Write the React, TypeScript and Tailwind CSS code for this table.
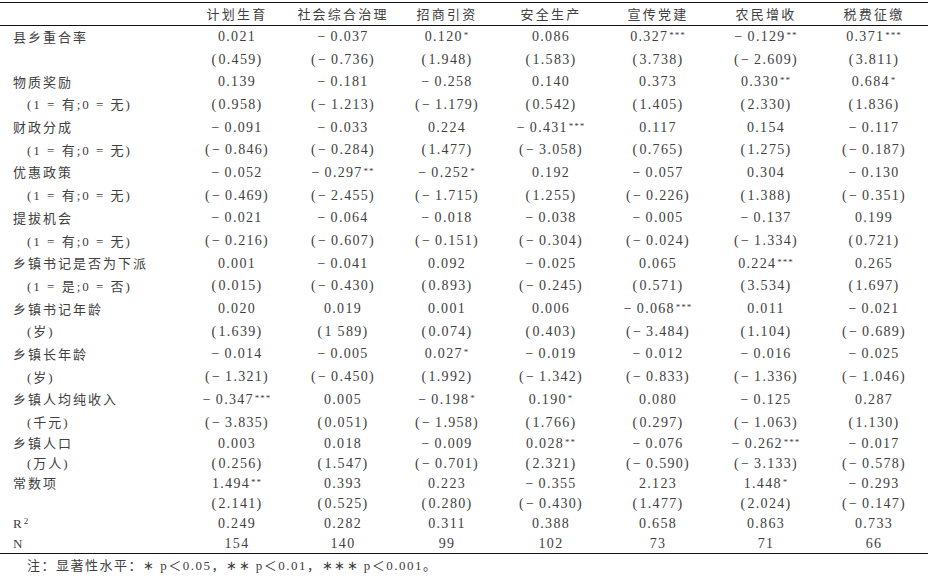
import type { ReactNode } from 'react'

const HEADERS = ['计划生育', '社会综合治理', '招商引资', '安全生产', '宣传党建', '农民增收', '税费征缴']
const WIDTHS = ['w-[106px]', 'w-[106px]', 'w-[102px]', 'w-[106px]', 'w-[108px]', 'w-[108px]', 'w-[108px]']

type Row = { label: string; sub?: boolean; cells: string[]; short?: boolean }

const YN = '(1 = 有;0 = 无)'

const ROWS: Row[] = [
  { label: '县乡重合率', cells: ['0.021', '-0.037', '0.120*', '0.086', '0.327***', '-0.129**', '0.371***'] },
  { label: '', cells: ['(0.459)', '(-0.736)', '(1.948)', '(1.583)', '(3.738)', '(-2.609)', '(3.811)'] },
  { label: '物质奖励', cells: ['0.139', '-0.181', '-0.258', '0.140', '0.373', '0.330**', '0.684*'] },
  { label: YN, sub: true, cells: ['(0.958)', '(-1.213)', '(-1.179)', '(0.542)', '(1.405)', '(2.330)', '(1.836)'] },
  { label: '财政分成', cells: ['-0.091', '-0.033', '0.224', '-0.431***', '0.117', '0.154', '-0.117'] },
  { label: YN, sub: true, cells: ['(-0.846)', '(-0.284)', '(1.477)', '(-3.058)', '(0.765)', '(1.275)', '(-0.187)'] },
  { label: '优惠政策', cells: ['-0.052', '-0.297**', '-0.252*', '0.192', '-0.057', '0.304', '-0.130'] },
  { label: YN, sub: true, cells: ['(-0.469)', '(-2.455)', '(-1.715)', '(1.255)', '(-0.226)', '(1.388)', '(-0.351)'] },
  { label: '提拔机会', cells: ['-0.021', '-0.064', '-0.018', '-0.038', '-0.005', '-0.137', '0.199'] },
  { label: YN, sub: true, cells: ['(-0.216)', '(-0.607)', '(-0.151)', '(-0.304)', '(-0.024)', '(-1.334)', '(0.721)'] },
  { label: '乡镇书记是否为下派', cells: ['0.001', '-0.041', '0.092', '-0.025', '0.065', '0.224***', '0.265'] },
  { label: '(1 = 是;0 = 否)', sub: true, cells: ['(0.015)', '(-0.430)', '(0.893)', '(-0.245)', '(0.571)', '(3.534)', '(1.697)'] },
  { label: '乡镇书记年龄', cells: ['0.020', '0.019', '0.001', '0.006', '-0.068***', '0.011', '-0.021'] },
  { label: '(岁)', sub: true, cells: ['(1.639)', '(1 589)', '(0.074)', '(0.403)', '(-3.484)', '(1.104)', '(-0.689)'] },
  { label: '乡镇长年龄', cells: ['-0.014', '-0.005', '0.027*', '-0.019', '-0.012', '-0.016', '-0.025'] },
  { label: '(岁)', sub: true, cells: ['(-1.321)', '(-0.450)', '(1.992)', '(-1.342)', '(-0.833)', '(-1.336)', '(-1.046)'] },
  { label: '乡镇人均纯收入', cells: ['-0.347***', '0.005', '-0.198*', '0.190*', '0.080', '-0.125', '0.287'] },
  { label: '(千元)', sub: true, cells: ['(-3.835)', '(0.051)', '(-1.958)', '(1.766)', '(0.297)', '(-1.063)', '(1.130)'] },
  { label: '乡镇人口', short: true, cells: ['0.003', '0.018', '-0.009', '0.028**', '-0.076', '-0.262***', '-0.017'] },
  { label: '(万人)', sub: true, short: true, cells: ['(0.256)', '(1.547)', '(-0.701)', '(2.321)', '(-0.590)', '(-3.133)', '(-0.578)'] },
  { label: '常数项', short: true, cells: ['1.494**', '0.393', '0.223', '-0.355', '2.123', '1.448*', '-0.293'] },
  { label: '', short: true, cells: ['(2.141)', '(0.525)', '(0.280)', '(-0.430)', '(1.477)', '(2.024)', '(-0.147)'] },
  { label: 'R2', short: true, cells: ['0.249', '0.282', '0.311', '0.388', '0.658', '0.863', '0.733'] },
  { label: 'N', short: true, cells: ['154', '140', '99', '102', '73', '71', '66'] },
]

// turns "(-0.431***)" style strings into spaced typeset pieces
function Num({ v }: { v: string }) {
  const m = v.match(/^(\()?(-)?([\d. ]+)(\))?(\*{0,3})$/)
  if (!m) return <>{v}</>
  const [, open, neg, body, close, stars] = m
  return (
    <span className="whitespace-nowrap">
      {open && <span className="mr-[1px]">(</span>}
      {neg && <span className="mr-[4px]">−</span>}
      {body}
      {close && <span>)</span>}
      {stars && <span className="relative -top-[3px] ml-[1px] text-[9px] tracking-[1px]">{stars}</span>}
    </span>
  )
}

function Label({ r }: { r: Row }): ReactNode {
  if (r.label === 'R2') return <span>R<sup className="text-[9px]">2</sup></span>
  return r.label
}

export default function App() {
  return (
    <div className="w-[948px] h-[579px] bg-white pt-[2px] text-[#404040] font-[family-name:'Liberation_Serif','Noto_Sans_CJK_SC',serif]">
      <table className="w-[928px] table-fixed border-collapse">
        <colgroup>
          <col className="w-[184px]" />
          {WIDTHS.map((w, i) => <col key={i} className={w} />)}
        </colgroup>
        <thead>
          <tr className="h-[23px] border-t border-b border-[#111]">
            <th />
            {HEADERS.map(h => (
              <th key={h} className="p-0 text-center font-normal text-[13px] tracking-[2.2px] leading-none">{h}</th>
            ))}
          </tr>
        </thead>
        <tbody>
          {ROWS.map((r, i) => (
            <tr key={i} className={`${r.short ? 'h-[20px]' : 'h-[22.7px]'} ${i === ROWS.length - 1 ? 'border-b border-[#111]' : ''}`}>
              <td className={`p-0 leading-none whitespace-nowrap text-[13px] tracking-[2px] ${r.sub ? 'pl-[27px]' : 'pl-[13px]'}`}>
                <Label r={r} />
              </td>
              {r.cells.map((c, j) => (
                <td key={j} className="p-0 text-center leading-none text-[14px] tracking-[1.3px]">
                  <Num v={c} />
                </td>
              ))}
            </tr>
          ))}
        </tbody>
      </table>
      <p className="pl-[27px] mt-[4px] text-[13px] leading-[16px] tracking-[1.5px]">
        注：显著性水平：∗ p＜0.05，∗∗ p＜0.01，∗∗∗ p＜0.001。
      </p>
    </div>
  )
}
